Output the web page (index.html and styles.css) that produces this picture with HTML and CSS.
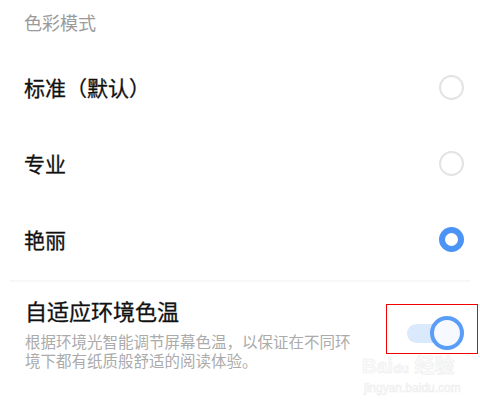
FILE: index.html
```html
<!DOCTYPE html>
<html>
<head>
	<meta charset="utf-8">
	<title>色彩模式</title>
	<link rel="stylesheet" href="styles.css">
</head>
<body>

<div class="page">
	<h2 class="group-title">色彩模式</h2>

	<div class="option">
		<span class="label">标准（默认）</span>
		<span class="radio"></span>
	</div>
	<div class="option">
		<span class="label">专业</span>
		<span class="radio"></span>
	</div>
	<div class="option">
		<span class="label">艳丽</span>
		<span class="radio checked"></span>
	</div>

	<div class="divider"></div>

	<div class="setting">
		<div class="setting-text">
			<h3>自适应环境色温</h3>
			<p class="hint">根据环境光智能调节屏幕色温，以保证在不同环境下都有纸质般舒适的阅读体验。</p>
		</div>
		<div class="switch on">
			<span class="track"></span>
			<span class="knob"></span>
		</div>
	</div>
</div>

<div class="mark"></div>

<div class="watermark">
	<div class="wm-logo">Bai<span class="wm-paw">du</span> 经验</div>
	<div class="wm-url">jingyan.baidu.com</div>
</div>

</body>
</html>
```

FILE: styles.css
```css
body {
	margin: 0;
	background: #fff;
	font-family: "Noto Sans CJK SC", "Noto Sans", sans-serif;
	color: #1f1f1f;
}

.page {
	width: 480px;
	height: 400px;
	overflow: hidden;
}

.group-title {
	margin: 0;
	padding: 12px 24px 17px;
	font-size: 18px;
	line-height: 20px;
	font-weight: normal;
	color: #9a9a9a;
}

.option {
	display: flex;
	align-items: center;
	justify-content: space-between;
	height: 76px;
	padding: 0 16px 0 24px;
}

.label {
	font-size: 21px;
	font-weight: normal;
	color: #111;
	-webkit-text-stroke: 0.3px #111;
}

.radio {
	box-sizing: border-box;
	width: 25px;
	height: 25px;
	border-radius: 50%;
	border: 2px solid #e3e3e3;
}

.radio.checked {
	border: 6px solid #4c93f6;
}

.divider {
	height: 2px;
	margin: 3px 10px 0;
	background: #f6f8f8;
}

.setting {
	display: flex;
	align-items: center;
	padding: 14px 16px 0 25px;
}

.setting-text {
	flex: 1;
}

.setting h3 {
	margin: 0;
	font-size: 22px;
	line-height: 28px;
	font-weight: normal;
	color: #111;
	-webkit-text-stroke: 0.3px #111;
}

.hint {
	width: 333px;
	margin: 8px 0 0;
	font-size: 15.5px;
	line-height: 19px;
	color: #ababab;
}

.switch {
	position: relative;
	width: 57px;
	height: 34px;
}

.track {
	position: absolute;
	left: 0;
	top: 8px;
	width: 44px;
	height: 19px;
	border-radius: 10px;
	background: #dbe9fc;
}

.knob {
	position: absolute;
	right: 0;
	top: 0;
	box-sizing: border-box;
	width: 34px;
	height: 34px;
	border-radius: 50%;
	border: 4px solid #5a9df6;
	background: #f6f9ff;
}

.mark {
	position: absolute;
	left: 386px;
	top: 304px;
	width: 90px;
	height: 48px;
	border: 1.5px solid #f00000;
}

.watermark {
	position: absolute;
	left: 362px;
	top: 354px;
	color: #fafafa;
	font-family: "Liberation Sans", "Noto Sans CJK SC", sans-serif;
	-webkit-text-stroke: 0.5px #ececec;
}

.wm-logo {
	font-size: 20px;
	line-height: 24px;
	font-weight: bold;
}

.wm-paw {
	font-size: 13px;
}

.wm-url {
	font-size: 12px;
	line-height: 14px;
	margin-left: 2px;
}
```
